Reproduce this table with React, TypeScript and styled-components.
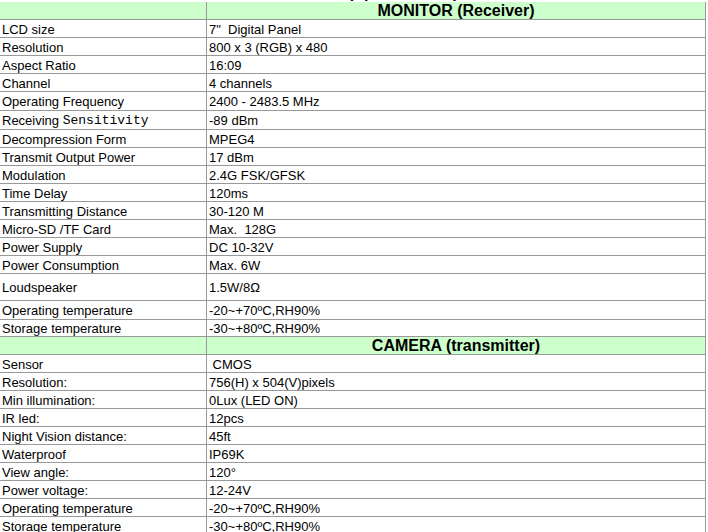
import styled, { createGlobalStyle } from "styled-components";

type Row = { label: string; value: string; h?: number; mono?: string };

const MONITOR_ROWS: Row[] = [
  { label: "LCD size", value: "7\"  Digital Panel" },
  { label: "Resolution", value: "800 x 3 (RGB) x 480" },
  { label: "Aspect Ratio", value: "16:09" },
  { label: "Channel", value: "4 channels" },
  { label: "Operating Frequency", value: "2400 - 2483.5 MHz", h: 19 },
  { label: "Receiving ", mono: "Sensitivity", value: "-89 dBm", h: 19 },
  { label: "Decompression Form", value: "MPEG4" },
  { label: "Transmit Output Power", value: "17 dBm" },
  { label: "Modulation", value: "2.4G FSK/GFSK" },
  { label: "Time Delay", value: "120ms" },
  { label: "Transmitting Distance", value: "30-120 M" },
  { label: "Micro-SD /TF Card", value: "Max.  128G" },
  { label: "Power Supply", value: "DC 10-32V" },
  { label: "Power Consumption", value: "Max. 6W" },
  { label: "Loudspeaker", value: "1.5W/8Ω", h: 27 },
  { label: "Operating temperature", value: "-20~+70ºC,RH90%", h: 19 },
  { label: "Storage temperature", value: "-30~+80ºC,RH90%", h: 17 },
];

const CAMERA_ROWS: Row[] = [
  { label: "Sensor", value: " CMOS" },
  { label: "Resolution:", value: "756(H) x 504(V)pixels" },
  { label: "Min illumination:", value: "0Lux (LED ON)" },
  { label: "IR led:", value: "12pcs" },
  { label: "Night Vision distance:", value: "45ft" },
  { label: "Waterproof", value: "IP69K" },
  { label: "View angle:", value: "120°" },
  { label: "Power voltage:", value: "12-24V" },
  { label: "Operating temperature", value: "-20~+70ºC,RH90%" },
  { label: "Storage temperature", value: "-30~+80ºC,RH90%" },
];

const GlobalStyle = createGlobalStyle`
  body {
    margin: 0;
    background: #ffffff;
    color: #000000;
    font-family: "Liberation Sans", Arial, sans-serif;
    font-size: 13px;
  }
`;

const Page = styled.div`
  width: 708px;
  height: 532px;
  overflow: hidden;
`;

// only the bottom edge of the heading above shows in the shot
const CaptionClip = styled.div`
  height: 2px;
  overflow: hidden;
`;

const CaptionText = styled.div`
  margin: -16px 0 0 348px;
  font-size: 16px;
  line-height: 18px;
  font-weight: bold;
  white-space: pre;
`;

const Sheet = styled.div`
  display: grid;
  grid-template-columns: 207px 499px;
`;

const Cell = styled.div<{ $h: number; $green?: boolean }>`
  box-sizing: border-box;
  height: ${(p) => p.$h}px;
  display: flex;
  align-items: center;
  padding: 1px 0 0 2px;
  border-right: 1px solid #999999;
  border-bottom: 1px solid #999999;
  background: ${(p) => (p.$green ? "#ccffcc" : "#ffffff")};
  white-space: pre;
  line-height: 15px;
`;

const SectionTitle = styled(Cell)`
  justify-content: center;
  padding: 0;
  font-size: 16px;
  font-weight: bold;
`;

const Mono = styled.span`
  font-family: "Liberation Mono", "Courier New", monospace;
  font-size: 13px;
`;

const Section = ({ title, rows }: { title: string; rows: Row[] }) => (
  <>
    <Cell $h={18} $green />
    <SectionTitle $h={18} $green>
      {title}
    </SectionTitle>
    {rows.map((r, i) => (
      <SpecRow key={i} row={r} />
    ))}
  </>
);

const SpecRow = ({ row }: { row: Row }) => (
  <>
    <Cell $h={row.h ?? 18}>
      {row.label}
      {row.mono && <Mono>{row.mono}</Mono>}
    </Cell>
    <Cell $h={row.h ?? 18}>{row.value}</Cell>
  </>
);

export default function App() {
  return (
    <>
      <GlobalStyle />
      <Page>
        <CaptionClip>
          <CaptionText>(Specification)</CaptionText>
        </CaptionClip>
        <Sheet>
          <Section title="MONITOR (Receiver)" rows={MONITOR_ROWS} />
          <Section title="CAMERA (transmitter)" rows={CAMERA_ROWS} />
        </Sheet>
      </Page>
    </>
  );
}
